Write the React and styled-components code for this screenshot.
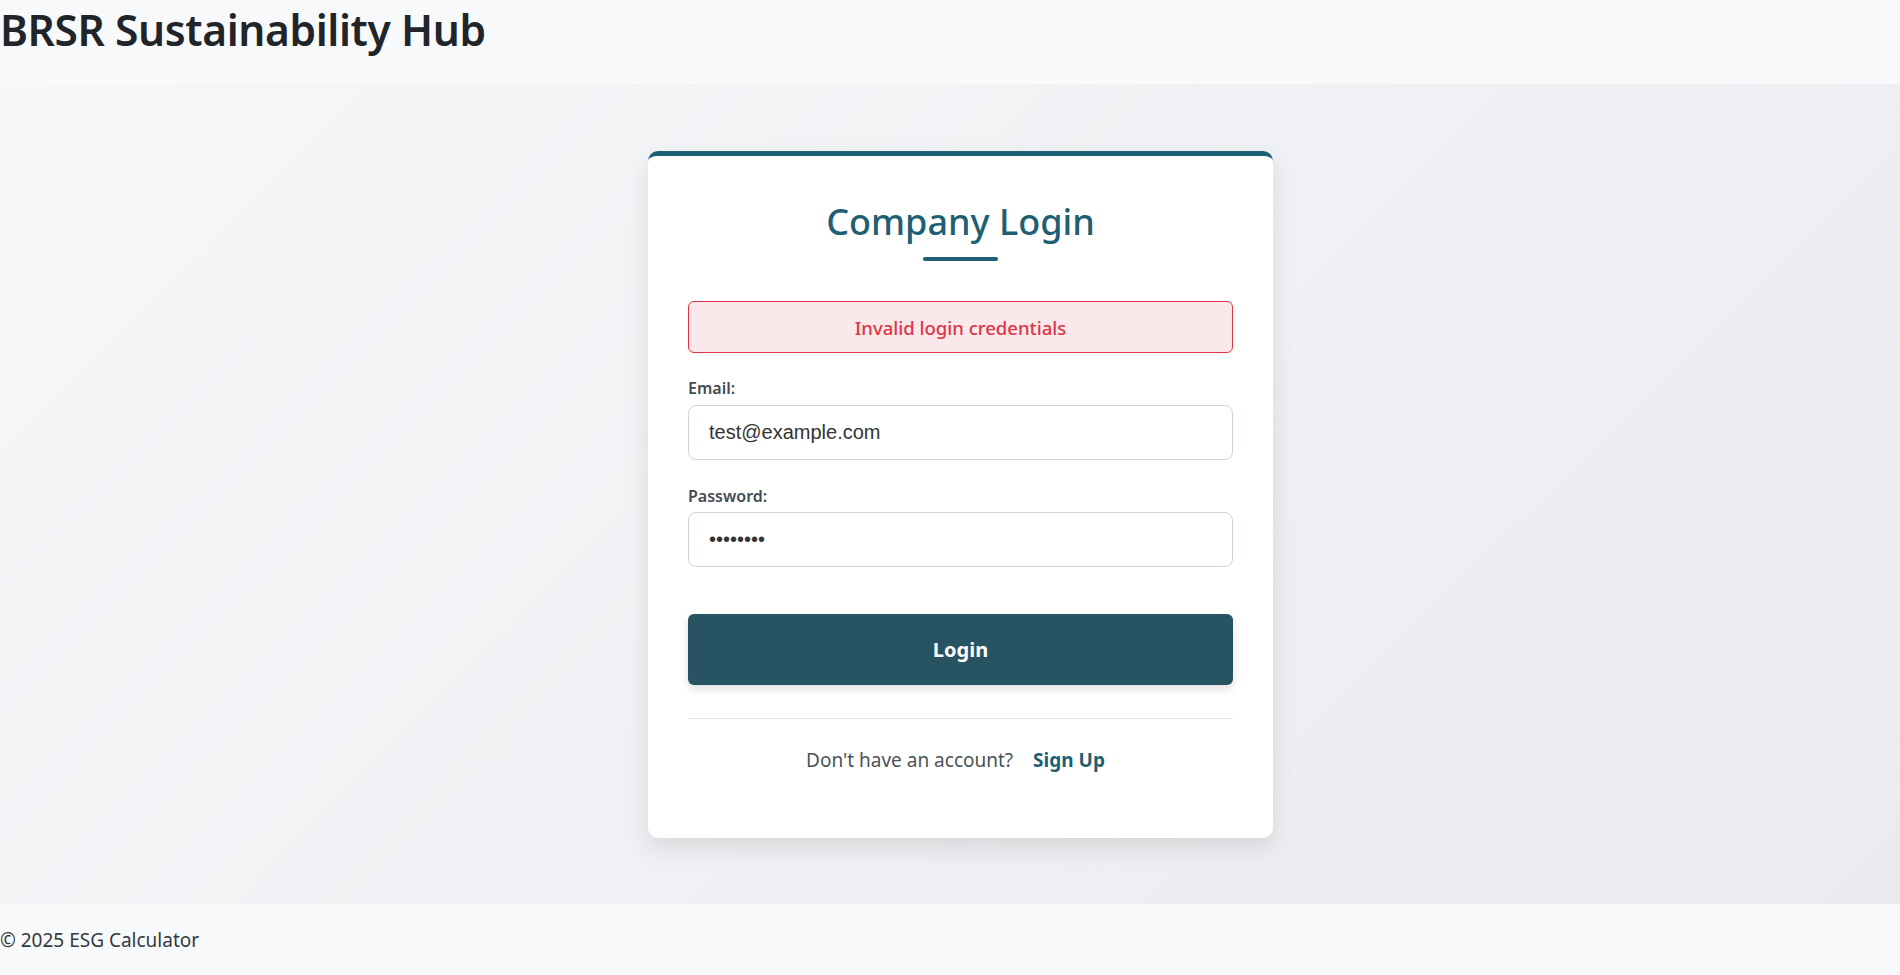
import React from 'react'
import styled, { createGlobalStyle } from 'styled-components'

const Global = createGlobalStyle`
  html, body {
    margin: 0;
    padding: 0;
  }
  body {
    font-family: "Noto Sans", "Open Sans", sans-serif;
    color: #212529;
    background: #f8f9fa;
  }
  * { box-sizing: border-box; }
`

const Page = styled.div`
  display: flex;
  flex-direction: column;
  min-height: 975px;
`

const Header = styled.header`
  height: 84px;
  background: #f8f9fa;
  display: flex;
  align-items: flex-start;
`

const Brand = styled.h1`
  margin: 0;
  font-size: 42.5px;
  font-weight: 600;
  line-height: 60px;
  color: #212529;
  letter-spacing: -0.4px;
`

const Main = styled.main`
  height: 820px;
  background: linear-gradient(135deg, #f6f7f9 0%, #e9ebee 100%);
  display: flex;
  justify-content: center;
  align-items: flex-start;
  padding: 67px 0 0 21px;
`

const Card = styled.div`
  width: 625px;
  height: 687px;
  background: #ffffff;
  border-top: 5px solid #1e5f74;
  border-radius: 10px;
  box-shadow: 0 10px 25px rgba(0, 0, 0, 0.1);
  padding: 44px 40px 0;
  display: flex;
  flex-direction: column;
`

const Title = styled.h2`
  margin: 0;
  text-align: center;
  font-size: 36px;
  font-weight: 500;
  line-height: 43px;
  color: #1e5f74;
`

const TitleBar = styled.div`
  width: 75px;
  height: 4px;
  border-radius: 2px;
  background: #1e5f74;
  margin: 14px auto 40px;
`

const Alert = styled.div`
  height: 52px;
  border: 1px solid #dc3545;
  border-radius: 6px;
  background: #fae8ea;
  color: #dc3545;
  font-size: 18.5px;
  font-weight: 500;
  display: flex;
  align-items: center;
  justify-content: center;
  margin-bottom: 23px;
`

const Field = styled.div`
  display: flex;
  flex-direction: column;
  gap: ${p => p.$gap}px;
  margin-bottom: ${p => p.$bottom}px;
`

const Label = styled.label`
  font-size: 16px;
  font-weight: 600;
  line-height: 24px;
  color: #444b52;
`

const Input = styled.input`
  height: 55px;
  width: 100%;
  border: 1px solid #ced4da;
  border-radius: 8px;
  padding: 0 20px;
  font-family: "Liberation Sans", Arial, sans-serif;
  font-size: 20px;
  color: #333;
  background: #fff;
  outline: none;
`

const Button = styled.button`
  height: 71px;
  width: 100%;
  border: none;
  border-radius: 6px;
  background: #285362;
  color: #ffffff;
  font-family: inherit;
  font-size: 20px;
  font-weight: 700;
  box-shadow: 0 4px 8px rgba(0, 0, 0, 0.12);
  cursor: pointer;
`

const Divider = styled.hr`
  border: none;
  border-top: 1px solid #e6e8eb;
  margin: 33px 0 0;
`

const SignupRow = styled.p`
  margin: 27px 0 0;
  text-align: center;
  font-size: 19px;
  line-height: 28px;
  color: #4a5259;
`

const SignupLink = styled.a`
  color: #1e5f74;
  font-weight: 700;
  text-decoration: none;
  margin: 0 10px 0 20px;
`

const Footer = styled.footer`
  flex: 1;
  background: #f8f9fa;
  display: flex;
  align-items: center;
  font-size: 19px;
  color: #343a40;
`

export default function App() {
  return (
    <Page>
      <Global />
      <Header>
        <Brand>BRSR Sustainability Hub</Brand>
      </Header>
      <Main>
        <Card>
          <Title>Company Login</Title>
          <TitleBar />
          <Alert>Invalid login credentials</Alert>
          <Field $gap={5} $bottom={24}>
            <Label>Email:</Label>
            <Input type="email" defaultValue="test@example.com" />
          </Field>
          <Field $gap={4} $bottom={47}>
            <Label>Password:</Label>
            <Input type="password" defaultValue="password" />
          </Field>
          <Button>Login</Button>
          <Divider />
          <SignupRow>
            Don't have an account?
            <SignupLink href="#">Sign Up</SignupLink>
          </SignupRow>
        </Card>
      </Main>
      <Footer>© 2025 ESG Calculator</Footer>
    </Page>
  )
}
